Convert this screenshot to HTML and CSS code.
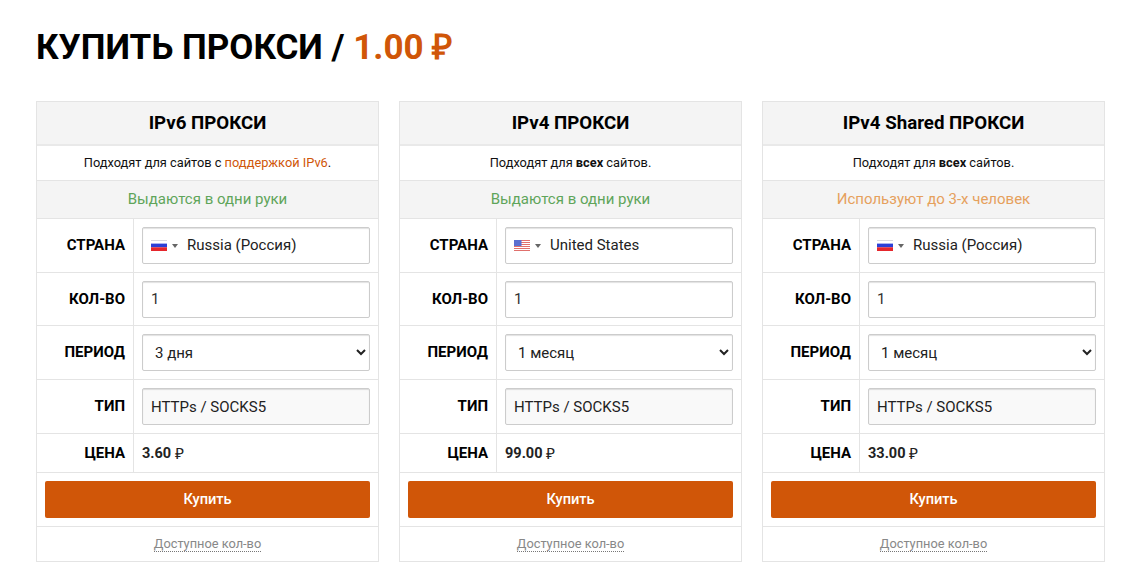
FILE: index.html
```html
<!DOCTYPE html>
<html lang="ru">
<head>
<meta charset="utf-8">
<title>Купить прокси</title>
<link rel="stylesheet" href="styles.css">
</head>
<body>
<main class="page">
  <h1 class="title">КУПИТЬ ПРОКСИ / <span class="accent">1.00 <span class="rub">₽</span></span></h1>
  <div class="cards">
    <section class="card">
      <h2 class="card-head">IPv6 ПРОКСИ</h2>
      <p class="card-desc">Подходят для сайтов с <a class="accent-link" href="#">поддержкой IPv6</a>.</p>
      <p class="card-status status-ok">Выдаются в одни руки</p>
      <div class="row row-tall">
        <div class="label">СТРАНА</div>
        <div class="value">
          <div class="country">
            <svg class="flag" viewBox="0 0 16 11"><rect width="16" height="11" fill="#fff"/><rect width="16" height="1" fill="#d8d8e0"/><rect y="3.6" width="16" height="3.7" fill="#2b3fd6"/><rect y="7.3" width="16" height="3.7" fill="#e5262c"/></svg>
            <span class="caret"></span>
            <span class="country-name">Russia (Россия)</span>
          </div>
        </div>
      </div>
      <div class="row row-qty">
        <div class="label">КОЛ-ВО</div>
        <div class="value"><input class="field" type="text" value="1"></div>
      </div>
      <div class="row row-tall">
        <div class="label">ПЕРИОД</div>
        <div class="value"><select class="field field-select"><option>3 дня</option></select></div>
      </div>
      <div class="row row-tall">
        <div class="label">ТИП</div>
        <div class="value"><input class="field field-readonly" type="text" value="HTTPs / SOCKS5" readonly></div>
      </div>
      <div class="row row-price">
        <div class="label">ЦЕНА</div>
        <div class="value price">3.60&nbsp;<span class="rub rub-small">₽</span></div>
      </div>
      <div class="card-buy"><button class="buy" type="button">Купить</button></div>
      <div class="card-foot"><a class="avail" href="#">Доступное кол-во</a></div>
    </section>

    <section class="card">
      <h2 class="card-head">IPv4 ПРОКСИ</h2>
      <p class="card-desc">Подходят для <b>всех</b> сайтов.</p>
      <p class="card-status status-ok">Выдаются в одни руки</p>
      <div class="row row-tall">
        <div class="label">СТРАНА</div>
        <div class="value">
          <div class="country">
            <svg class="flag" viewBox="0 0 16 11"><rect width="16" height="11" fill="#fff"/><g fill="#e0706c"><rect width="16" height="1"/><rect y="2" width="16" height="1"/><rect y="4" width="16" height="1"/><rect y="6" width="16" height="1"/><rect y="8" width="16" height="1"/><rect y="10" width="16" height="1"/></g><rect width="7.5" height="6" fill="#5a6fd0"/></svg>
            <span class="caret"></span>
            <span class="country-name">United States</span>
          </div>
        </div>
      </div>
      <div class="row row-qty">
        <div class="label">КОЛ-ВО</div>
        <div class="value"><input class="field" type="text" value="1"></div>
      </div>
      <div class="row row-tall">
        <div class="label">ПЕРИОД</div>
        <div class="value"><select class="field field-select"><option>1 месяц</option></select></div>
      </div>
      <div class="row row-tall">
        <div class="label">ТИП</div>
        <div class="value"><input class="field field-readonly" type="text" value="HTTPs / SOCKS5" readonly></div>
      </div>
      <div class="row row-price">
        <div class="label">ЦЕНА</div>
        <div class="value price">99.00&nbsp;<span class="rub rub-small">₽</span></div>
      </div>
      <div class="card-buy"><button class="buy" type="button">Купить</button></div>
      <div class="card-foot"><a class="avail" href="#">Доступное кол-во</a></div>
    </section>

    <section class="card">
      <h2 class="card-head">IPv4 Shared ПРОКСИ</h2>
      <p class="card-desc">Подходят для <b>всех</b> сайтов.</p>
      <p class="card-status status-warn">Используют до 3-х человек</p>
      <div class="row row-tall">
        <div class="label">СТРАНА</div>
        <div class="value">
          <div class="country">
            <svg class="flag" viewBox="0 0 16 11"><rect width="16" height="11" fill="#fff"/><rect width="16" height="1" fill="#d8d8e0"/><rect y="3.6" width="16" height="3.7" fill="#2b3fd6"/><rect y="7.3" width="16" height="3.7" fill="#e5262c"/></svg>
            <span class="caret"></span>
            <span class="country-name">Russia (Россия)</span>
          </div>
        </div>
      </div>
      <div class="row row-qty">
        <div class="label">КОЛ-ВО</div>
        <div class="value"><input class="field" type="text" value="1"></div>
      </div>
      <div class="row row-tall">
        <div class="label">ПЕРИОД</div>
        <div class="value"><select class="field field-select"><option>1 месяц</option></select></div>
      </div>
      <div class="row row-tall">
        <div class="label">ТИП</div>
        <div class="value"><input class="field field-readonly" type="text" value="HTTPs / SOCKS5" readonly></div>
      </div>
      <div class="row row-price">
        <div class="label">ЦЕНА</div>
        <div class="value price">33.00&nbsp;<span class="rub rub-small">₽</span></div>
      </div>
      <div class="card-buy"><button class="buy" type="button">Купить</button></div>
      <div class="card-foot"><a class="avail" href="#">Доступное кол-во</a></div>
    </section>
  </div>
</main>
</body>
</html>
```
FILE: styles.css
```css
* { box-sizing: border-box; }
html, body { margin: 0; background: #fff; }
body { font-family: Roboto, "Noto Sans", sans-serif; color: #000; overflow: hidden; }
.page { width: 1127px; height: 574px; padding: 0 22px 0 36px; overflow: hidden; }
.title { margin: 0; padding-top: 26px; height: 101px; font-size: 35px; line-height: 42px; font-weight: 700; }
.accent { color: #d05608; }
.rub { font-family: "Liberation Sans", Arial, sans-serif; }
.rub-small { font-weight: 400; font-size: 15.5px; }
.cards { display: flex; gap: 20px; }
.card { width: 343px; border: 1px solid #e4e4e4; }
.card-head { margin: 0; height: 44px; background: #f4f4f4; border-bottom: 2px solid #e9e9e9; font-size: 18.7px; font-weight: 700; line-height: 42px; text-align: center; }
.card-desc { margin: 0; height: 35px; font-size: 12.8px; line-height: 34px; text-align: center; color: #111; border-bottom: 1px solid #e4e4e4; }
.card-desc b { font-weight: 700; }
.accent-link { color: #d05608; text-decoration: none; }
.card-status { margin: 0; height: 38px; font-size: 15px; line-height: 37px; text-align: center; background: #f4f4f4; border-bottom: 1px solid #e4e4e4; }
.status-ok { color: #5fa55a; }
.status-warn { color: #e6a05c; }
.row { display: flex; border-bottom: 1px solid #e4e4e4; }
.row-tall { height: 54px; }
.row-qty { height: 53px; }
.row-price { height: 39px; }
.label { width: 97px; flex: none; border-right: 1px solid #e4e4e4; padding: 0 8px 1px 0; display: flex; align-items: center; justify-content: flex-end; font-size: 15px; font-weight: 700; }
.value { flex: 1; min-width: 0; padding: 8px 8px 0; }
.field { display: block; width: 228px; height: 37px; border: 1px solid #ccc; border-radius: 2px; box-shadow: inset 0 1px 1px rgba(0,0,0,.12); background: #fff; padding: 0 8px 2px; font: 15px Roboto, sans-serif; color: #333; outline: none; }
.field-select { padding: 0 8px; color: #222; }
.field-readonly { background: #f9f9f9; color: #222; padding-bottom: 0; }
.country { width: 228px; height: 37px; border: 1px solid #ccc; border-radius: 2px; box-shadow: inset 0 1px 1px rgba(0,0,0,.12); display: flex; align-items: center; padding: 0 0 2px 8px; font-size: 15px; color: #222; }
.flag { width: 16px; height: 11px; flex: none; margin-top: 2px; }
.caret { margin: 2px 0 0 5px; width: 0; height: 0; border-left: 3px solid transparent; border-right: 3px solid transparent; border-top: 4px solid #666; flex: none; }
.country-name { margin-left: 9px; }
.price { padding-top: 0; display: flex; align-items: center; font-size: 14.5px; font-weight: 700; color: #222; }
.card-buy { height: 54px; padding: 8px; border-bottom: 1px solid #e4e4e4; }
.buy { display: block; width: 100%; height: 37px; border: 0; border-radius: 2px; padding: 0 0 2px; background: #d05608; color: #fff; font: 500 14.6px Roboto, sans-serif; }
.card-foot { height: 34px; display: flex; align-items: center; justify-content: center; }
.avail { font-size: 12.8px; color: #888; text-decoration: none; border-bottom: 1px dotted #777; line-height: 14px; }
```
